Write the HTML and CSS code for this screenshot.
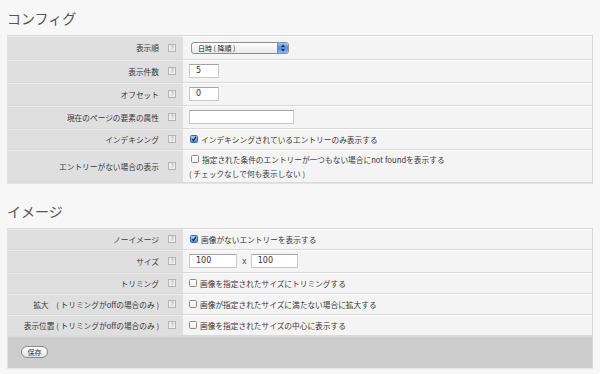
FILE: index.html
```html
<!DOCTYPE html>
<html lang="ja">
<head>
<meta charset="utf-8">
<title>設定</title>
<link rel="stylesheet" href="styles.css">
</head>
<body>
<div class="page">
  <section class="section">
    <h2 class="title">コンフィグ</h2>
    <div class="table">
      <div class="row r24">
        <div class="label">表示順<span class="help">?</span></div>
        <div class="value">
          <div class="select"><span class="sel-text">日時 ( 降順 )</span><span class="sel-cap"><svg viewBox="0 0 8 10" width="8" height="10"><path d="M2 4 L4 1.5 L6 4 Z M2 6 L4 8.5 L6 6 Z" fill="#1c2a45"/></svg></span></div>
        </div>
      </div>
      <div class="row r23">
        <div class="label">表示件数<span class="help">?</span></div>
        <div class="value"><span class="input w30">5</span></div>
      </div>
      <div class="row r23">
        <div class="label">オフセット<span class="help">?</span></div>
        <div class="value"><span class="input w30">0</span></div>
      </div>
      <div class="row r23">
        <div class="label">現在のページの要素の属性<span class="help">?</span></div>
        <div class="value"><span class="input w105"></span></div>
      </div>
      <div class="row r21">
        <div class="label">インデキシング<span class="help">?</span></div>
        <div class="value"><span class="cb on"><svg viewBox="0 0 8 8" width="8" height="8"><path d="M1.6 4.2 L3.3 6.2 L6.8 0.8" fill="none" stroke="#15203a" stroke-width="1.4"/></svg></span>インデキシングされているエントリーのみ表示する</div>
      </div>
      <div class="row r33">
        <div class="label">エントリーがない場合の表示<span class="help">?</span></div>
        <div class="value col">
          <div class="line"><span class="cb"></span>指定された条件のエントリーが一つもない場合にnot foundを表示する</div>
          <div class="line">( チェックなしで何も表示しない )</div>
        </div>
      </div>
    </div>
  </section>

  <section class="section second">
    <h2 class="title">イメージ</h2>
    <div class="table">
      <div class="row r21">
        <div class="label">ノーイメージ<span class="help">?</span></div>
        <div class="value"><span class="cb on"><svg viewBox="0 0 8 8" width="8" height="8"><path d="M1.6 4.2 L3.3 6.2 L6.8 0.8" fill="none" stroke="#15203a" stroke-width="1.4"/></svg></span>画像がないエントリーを表示する</div>
      </div>
      <div class="row r23">
        <div class="label">サイズ<span class="help">?</span></div>
        <div class="value"><span class="input w48">100</span><span class="times">x</span><span class="input w47">100</span></div>
      </div>
      <div class="row r21">
        <div class="label">トリミング<span class="help">?</span></div>
        <div class="value"><span class="cb"></span>画像を指定されたサイズにトリミングする</div>
      </div>
      <div class="row r21">
        <div class="label">拡大　( トリミングがoffの場合のみ )<span class="help">?</span></div>
        <div class="value"><span class="cb"></span>画像が指定されたサイズに満たない場合に拡大する</div>
      </div>
      <div class="row r21">
        <div class="label">表示位置 ( トリミングがoffの場合のみ )<span class="help">?</span></div>
        <div class="value"><span class="cb"></span>画像を指定されたサイズの中心に表示する</div>
      </div>
      <div class="footer">
        <button class="btn" type="button">保存</button>
      </div>
    </div>
  </section>
</div>
</body>
</html>
```
FILE: styles.css
```css
html, body {
  margin: 0;
  padding: 0;
  background: #f7f7f7;
}
body {
  font-family: "Noto Sans CJK JP", "Noto Sans", sans-serif;
  color: #383838;
  font-size: 7.7px;
}
.page {
  padding-left: 7px;
  width: 585px;
}
.title {
  margin: 0;
  padding: 10px 0 10px;
  font-size: 14px;
  line-height: 16px;
  font-weight: normal;
  color: #555;
}
.second {
  margin-top: 9px;
}
.table {
  border-top: 1px solid #d9d9d9;
  border-right: 1px solid #d9d9d9;
  border-left: 1px solid #e2e2e2;
  border-bottom: 1px solid #e4e4e4;
  box-sizing: border-box;
  width: 586px;
  margin-top: -1px;
}
.row {
  display: grid;
  grid-template-columns: 175px 1fr;
  border-bottom: 1px solid #d9d9d9;
  box-sizing: border-box;
}
.r24 { height: 24px; }
.r23 { height: 23px; }
.r21 { height: 21px; }
.r33 { height: 33px; }
.label {
  background: #dfdfdf;
  display: flex;
  align-items: center;
  justify-content: flex-end;
  padding-right: 7px;
  white-space: nowrap;
  line-height: 11px;
  box-shadow: inset 0 1px 0 #eaeaea;
}
.help {
  display: inline-block;
  box-sizing: border-box;
  width: 8px;
  height: 8px;
  margin-left: 9px;
  border: 1px solid #b3b3b3;
  background: #ededed;
  color: #999;
  font-size: 6px;
  line-height: 6px;
  text-align: center;
  font-family: "DejaVu Sans", sans-serif;
}
.value {
  background: #f4f4f4;
  display: flex;
  align-items: center;
  padding-left: 6px;
  white-space: nowrap;
  line-height: 11px;
  box-shadow: inset 0 1px 0 #fdfdfd;
}
.value.col {
  flex-direction: column;
  align-items: flex-start;
  justify-content: center;
  gap: 3px;
}
.line {
  display: flex;
  align-items: center;
}
.input {
  display: inline-block;
  box-sizing: border-box;
  height: 14px;
  background: #fff;
  border: 1px solid #cacaca;
  border-top-color: #a4a4a4;
  padding-left: 6px;
  font-size: 8px;
  line-height: 12px;
  color: #333;
  font-family: "DejaVu Sans", sans-serif;
}
.w30 { width: 30px; }
.w105 { width: 105px; }
.w48 { width: 48px; }
.w47 { width: 47px; }
.times {
  margin: 0 4px 0 5px;
  color: #555;
  font-family: "DejaVu Sans", sans-serif;
  font-size: 8px;
}
.select {
  display: flex;
  align-items: center;
  box-sizing: border-box;
  width: 98px;
  height: 12px;
  margin-left: 2px;
  border: 1px solid #8d8d8d;
  border-radius: 3px;
  background: linear-gradient(#ffffff, #e9e9e9);
  overflow: hidden;
}
.sel-text {
  flex: 1;
  padding-left: 6px;
  font-size: 7px;
  line-height: 10px;
  color: #222;
}
.sel-cap {
  width: 10px;
  height: 10px;
  display: flex;
  align-items: center;
  justify-content: center;
  background: linear-gradient(#9cc3f2, #4f8fe0 50%, #8abaf2);
  border-left: 1px solid #6f8fb8;
}
.cb {
  display: inline-flex;
  align-items: center;
  justify-content: center;
  box-sizing: border-box;
  width: 8px;
  height: 8px;
  margin-right: 3px;
  border: 1px solid #8a8a8a;
  border-radius: 1.5px;
  background: linear-gradient(#ffffff, #ececec);
  flex: none;
}
.line .cb { margin-left: 2px; }
.cb.on {
  margin-left: 1px;
  border-color: #44689c;
  background: linear-gradient(#a9cdf6, #4d8ee0);
}
.cb svg { display: block; }
.footer {
  height: 32px;
  background: #cccccc;
  display: flex;
  align-items: center;
  padding-left: 13px;
  box-shadow: inset 0 1px 0 #d9d9d9;
}
.btn {
  box-sizing: border-box;
  width: 27px;
  height: 12px;
  padding: 0;
  border: 1px solid #8a8a8a;
  border-radius: 6px;
  background: linear-gradient(#ffffff, #e6e6e6);
  font-family: "Noto Sans CJK JP", sans-serif;
  font-size: 7px;
  line-height: 10px;
  color: #333;
}
```
